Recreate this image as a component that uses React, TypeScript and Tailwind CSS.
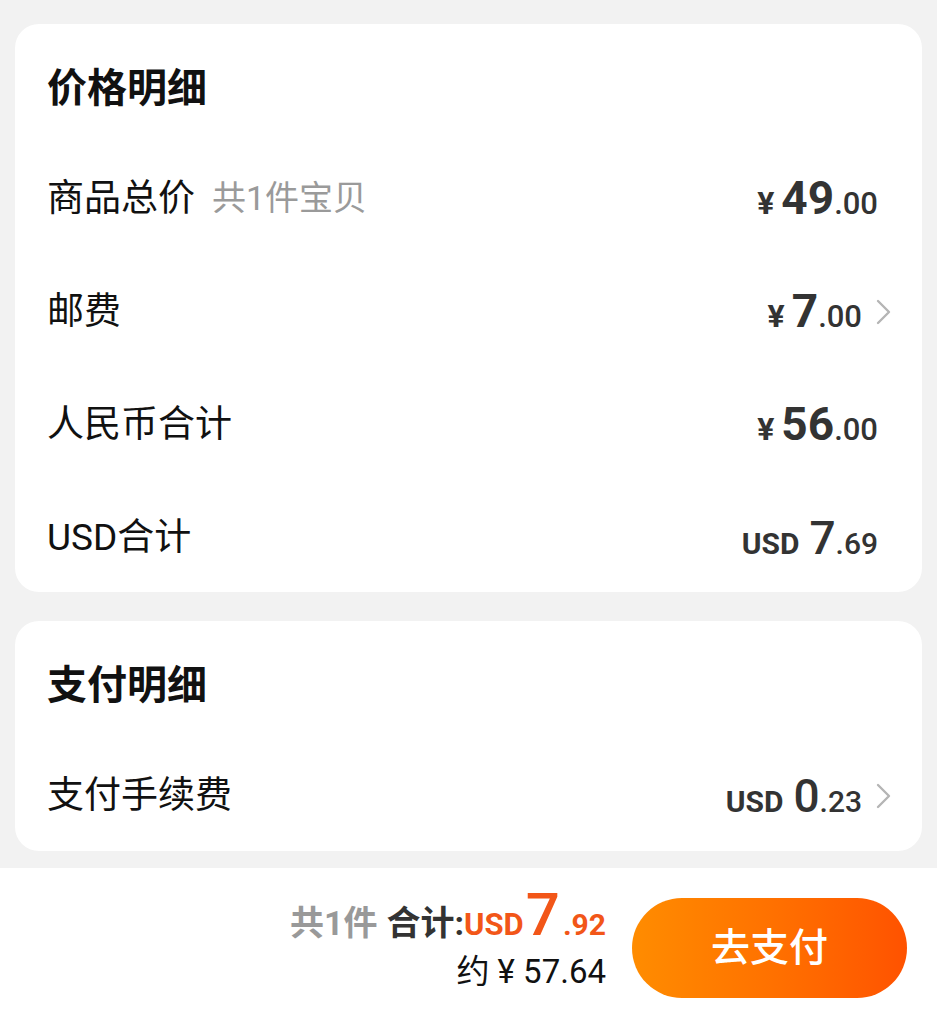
import React from 'react';

const font = { fontFamily: 'Roboto, "Noto Sans CJK SC", sans-serif' };

function Chevron() {
  return (
    <svg width="16" height="26" viewBox="0 0 16 26" className="ml-[14px] shrink-0">
      <path d="M2 2 L13 13 L2 24" fill="none" stroke="#b5b5b5" strokeWidth="2.4" strokeLinecap="round" strokeLinejoin="round" />
    </svg>
  );
}

function Yuan({ int, dec }: { int: string; dec: string }) {
  return (
    <div className="flex items-baseline text-[#333] font-bold">
      <span className="text-[32px] mr-[7px]">¥</span>
      <span className="text-[46px] leading-none">{int}</span>
      <span className="text-[31px] font-medium">.{dec}</span>
    </div>
  );
}

function Usd({ int, dec }: { int: string; dec: string }) {
  return (
    <div className="flex items-baseline text-[#333] font-bold">
      <span className="text-[30px] mr-[10px]">USD</span>
      <span className="text-[46px] leading-none font-medium">{int}</span>
      <span className="text-[30px] font-medium">.{dec}</span>
    </div>
  );
}

function Row({ label, extra, children, arrow }: { label: string; extra?: string; children: React.ReactNode; arrow?: boolean }) {
  return (
    <div className="h-[113px] flex items-center justify-between">
      <div className="flex items-center">
        <span className="text-[37px] text-[#111]">{label}</span>
        {extra && <span className="text-[34px] text-[#9a9a9a] ml-[17px]">{extra}</span>}
      </div>
      <div className="flex items-center">
        <div className={arrow ? 'mt-[6px]' : 'mt-[6px] mr-[14px]'}>{children}</div>
        {arrow && <Chevron />}
      </div>
    </div>
  );
}

function Card({ title, children, className }: { title: string; children: React.ReactNode; className?: string }) {
  return (
    <div className={'bg-white rounded-[24px] pl-[32px] pr-[30px] pt-[45px] ' + (className ?? '')}>
      <h2 className="text-[40px] leading-[40px] font-bold text-[#111] mb-[33px]">{title}</h2>
      {children}
    </div>
  );
}

export default function App() {
  return (
    <div style={font} className="h-[1024px] bg-[#f2f2f2] flex flex-col overflow-hidden">
      <div className="px-[15px] pt-[24px]">
        <Card title="价格明细" className="h-[568px]">
          <Row label="商品总价" extra="共1件宝贝">
            <Yuan int="49" dec="00" />
          </Row>
          <Row label="邮费" arrow>
            <Yuan int="7" dec="00" />
          </Row>
          <Row label="人民币合计">
            <Yuan int="56" dec="00" />
          </Row>
          <Row label="USD合计">
            <Usd int="7" dec="69" />
          </Row>
        </Card>
        <Card title="支付明细" className="mt-[29px] h-[230px]">
          <Row label="支付手续费" arrow>
            <Usd int="0" dec="23" />
          </Row>
        </Card>
      </div>
      <div className="flex-1" />
      <div className="h-[156px] bg-white flex items-start justify-end pr-[30px] pt-[17px]">
        <div className="flex flex-col items-end mr-[26px]">
          <div className="flex items-baseline font-bold leading-none h-[62px]">
            <span className="text-[34px] text-[#999]">共1件</span>
            <span className="text-[34px] text-[#333] ml-[9px]">合计:</span>
            <span className="text-[31px] text-[#f25618]">USD</span>
            <span className="text-[60px] text-[#f25618] font-medium ml-[2px]">7</span>
            <span className="text-[30px] text-[#f25618] ml-[3px]">.92</span>
          </div>
          <div className="text-[33px] text-[#111] leading-[40px] mt-[5px]">约 ¥ 57.64</div>
        </div>
        <button className="mt-[13px] w-[275px] h-[100px] rounded-full bg-gradient-to-r from-[#ff8c00] to-[#ff5200] text-white text-[39px] font-medium">
          去支付
        </button>
      </div>
    </div>
  );
}
